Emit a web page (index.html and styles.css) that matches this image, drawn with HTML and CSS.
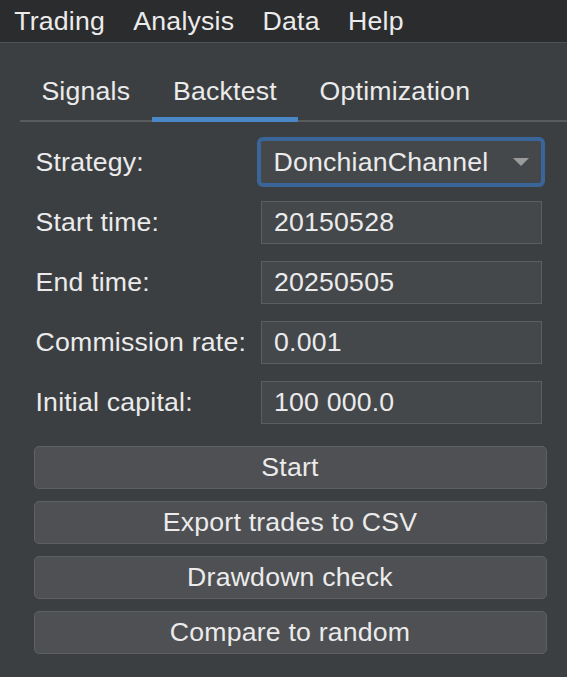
FILE: index.html
```html
<!DOCTYPE html>
<html>
<head>
<meta charset="utf-8">
<link rel="stylesheet" href="styles.css">
</head>
<body>
<div class="menubar">
  <span class="menu-item">Trading</span>
  <span class="menu-item">Analysis</span>
  <span class="menu-item">Data</span>
  <span class="menu-item">Help</span>
</div>
<div class="tabwidget">
  <div class="tabbar">
    <span class="tab">Signals</span>
    <span class="tab active">Backtest</span>
    <span class="tab">Optimization</span>
  </div>
  <div class="pane">
    <div class="form">
      <span class="label">Strategy:</span>
      <div class="combo">
        <span>DonchianChannel</span>
        <svg class="arrow" width="16" height="8" viewBox="0 0 16 8"><polygon points="0,0 16,0 8,8" fill="#9b9b9b"/></svg>
      </div>
      <span class="label">Start time:</span>
      <div class="input">20150528</div>
      <span class="label">End time:</span>
      <div class="input">20250505</div>
      <span class="label">Commission rate:</span>
      <div class="input">0.001</div>
      <span class="label">Initial capital:</span>
      <div class="input">100 000.0</div>
    </div>
    <div class="buttons">
      <div class="button">Start</div>
      <div class="button">Export trades to CSV</div>
      <div class="button">Drawdown check</div>
      <div class="button">Compare to random</div>
    </div>
  </div>
</div>
</body>
</html>
```
FILE: styles.css
```css
html, body {
  margin: 0;
  padding: 0;
  background: #3c3f42;
  color: #ebebeb;
  font-family: "Liberation Sans", Arial, sans-serif;
  font-size: 26.67px;
  letter-spacing: 0.2px;
}

.menubar {
  display: flex;
  height: 42px;
  line-height: 42px;
  background: #2b2c2e;
  border-bottom: 1px solid #4f5256;
}

.menu-item {
  padding: 0 14.2px;
  white-space: nowrap;
}

.tabwidget {
  padding-left: 20px;
}

.tabbar {
  display: flex;
  margin-top: 27px;
  border-bottom: 2px solid #595c5f;
}

.tab {
  line-height: 42px;
  padding: 0 21.4px 5px;
  border-bottom: 5px solid transparent;
  margin-bottom: -2px;
  white-space: nowrap;
}

.tab.active {
  border-bottom-color: #4a87c6;
}

.pane {
  padding: 18.5px 20.5px 0 13.5px;
}

.form {
  display: grid;
  grid-template-columns: 225px 1fr;
  row-gap: 17px;
  margin: 0 5px 0 2px;
  align-items: center;
}

.label {
  white-space: nowrap;
}

.input {
  box-sizing: border-box;
  height: 43px;
  line-height: 41px;
  padding: 0 12.5px;
  background: #45484b;
  border: 1px solid #5b5e61;
}

.combo {
  box-sizing: border-box;
  height: 50px;
  margin: -3.5px -3.5px;
  padding: 0 12.5px 0 12.5px;
  background: #45484b;
  border: 4px solid #3a6599;
  border-radius: 6px;
  display: flex;
  align-items: center;
  justify-content: space-between;
}

.arrow {
  display: block;
}

.buttons {
  display: flex;
  flex-direction: column;
  gap: 12px;
  margin-top: 22.5px;
}

.button {
  box-sizing: border-box;
  height: 43px;
  line-height: 41px;
  text-align: center;
  background: #4e5053;
  border: 1px solid #5e6063;
  border-radius: 5px;
}
```
